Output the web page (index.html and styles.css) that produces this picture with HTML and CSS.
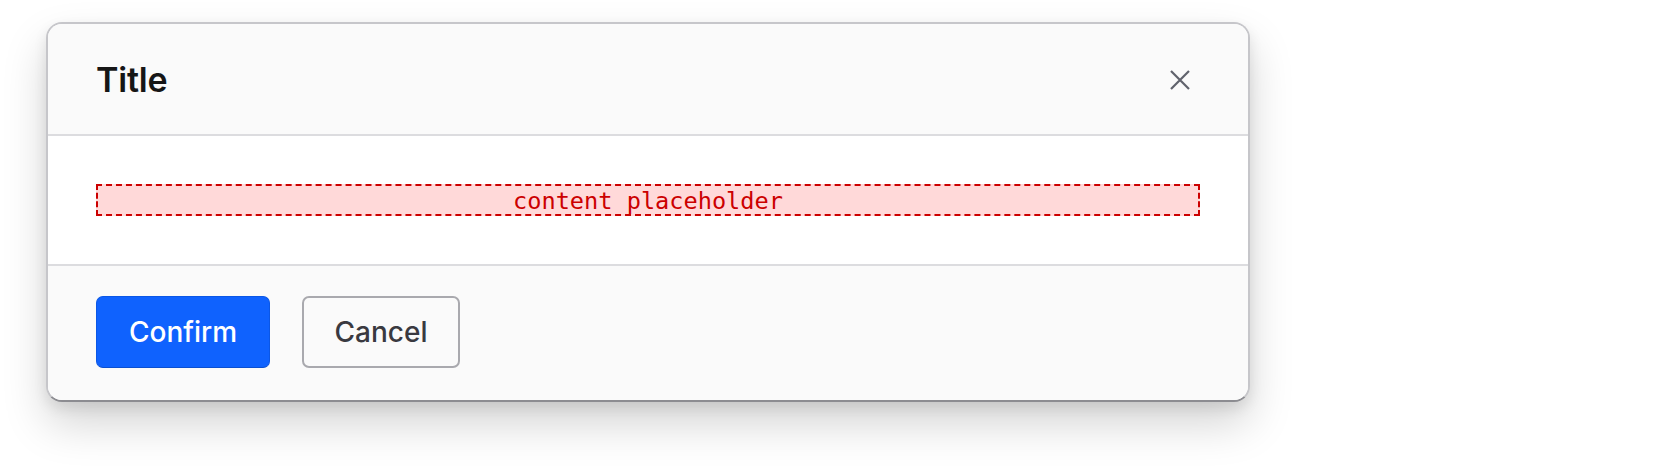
FILE: index.html
```html
<!DOCTYPE html>
<html lang="en">
<head>
<meta charset="utf-8">
<title>Dialog</title>
<link rel="stylesheet" href="styles.css">
</head>
<body>
<div class="stage">
  <div class="dialog" role="dialog" aria-labelledby="dlg-title">
    <div class="dialog-header">
      <h2 class="dialog-title" id="dlg-title">Title</h2>
      <button class="close-btn" aria-label="Close">
        <svg width="20" height="20" viewBox="0 0 20 20" aria-hidden="true">
          <path d="M1 1 L19 19 M19 1 L1 19" stroke="#60626c" stroke-width="2.2" fill="none"/>
        </svg>
      </button>
    </div>
    <div class="dialog-body">
      <div class="placeholder">content placeholder</div>
    </div>
    <div class="dialog-footer">
      <button class="btn btn-primary">Confirm</button>
      <button class="btn btn-secondary">Cancel</button>
    </div>
  </div>
</div>
</body>
</html>
```

FILE: styles.css
```css
html, body {
  margin: 0;
  padding: 0;
  background: #ffffff;
}
body {
  font-family: Inter, "Noto Sans", "Liberation Sans", sans-serif;
  min-height: 472px;
}
.stage {
  padding: 22px 0 60px 46px;
}
.dialog {
  width: 1200px;
  border: 2px solid #c6c6ca;
  border-bottom-color: #8c8c91;
  border-radius: 16px;
  overflow: hidden;
  background: #ffffff;
  box-shadow: 0 22px 44px rgba(0, 0, 0, 0.17), 0 6px 14px rgba(0, 0, 0, 0.09);
}
.dialog-header {
  display: flex;
  align-items: center;
  justify-content: space-between;
  height: 112px;
  padding: 0 48px;
  box-sizing: border-box;
  background: #fafafa;
  border-bottom: 2px solid #dcdcdf;
}
.dialog-title {
  margin: 0;
  font-size: 34px;
  line-height: 47px;
  font-weight: 600;
  color: #161616;
  letter-spacing: -0.2px;
}
.close-btn {
  width: 40px;
  height: 40px;
  padding: 10px;
  margin: 0;
  border: 0;
  background: transparent;
  display: flex;
  align-items: center;
  justify-content: center;
  position: relative;
  top: 1px;
}
.dialog-body {
  padding: 48px;
  background: #ffffff;
}
.placeholder {
  height: 28px;
  border: 2px dashed #cc0000;
  background: #ffd9d9;
  color: #cc0000;
  font-family: "DejaVu Sans Mono", "Liberation Mono", monospace;
  font-size: 23.6px;
  line-height: 31px;
  text-align: center;
}
.dialog-footer {
  display: flex;
  gap: 32px;
  padding: 30px 48px 32px;
  background: #fafafa;
  border-top: 2px solid #dcdcdf;
}
.btn {
  height: 72px;
  border-radius: 7px;
  font-family: Inter, "Noto Sans", "Liberation Sans", sans-serif;
  font-size: 28px;
  font-weight: 500;
  margin: 0;
}
.btn-primary {
  width: 174px;
  background: #0f62fe;
  border: 1px solid #0b57e6;
  border-bottom-color: #0a4fd0;
  color: #ffffff;
}
.btn-secondary {
  width: 158px;
  background: #fafafa;
  border: 2px solid #a9a9ae;
  color: #393940;
}
```
